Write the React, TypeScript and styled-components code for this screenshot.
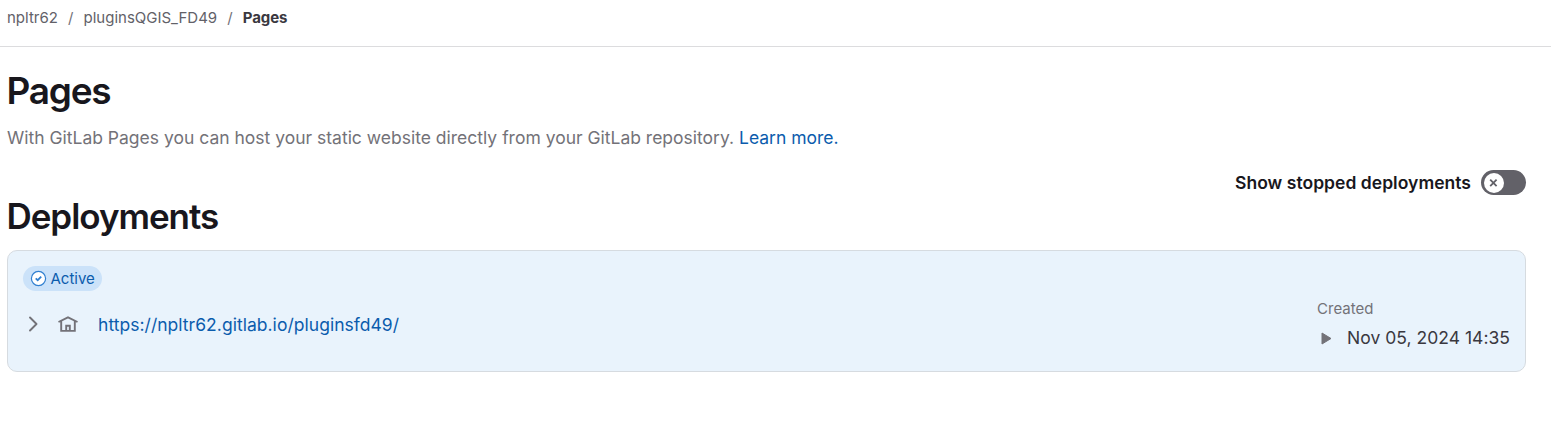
import React from 'react';
import styled, { createGlobalStyle } from 'styled-components';

const GlobalStyle = createGlobalStyle`
  * { box-sizing: border-box; }
  body { margin: 0; background: #fff; font-family: Inter, "Noto Sans", sans-serif; color: #18171d; }
  a { text-decoration: none; }
`;
const Breadcrumbs = styled.nav`
  display: flex;
  align-items: center;
  height: 47px;
  padding: 0 7px 11px;
  border-bottom: 1px solid #dcdcde;
  font-size: 15px;
  line-height: 20px;
`;
const Crumb = styled.a<{ $current?: boolean }>`
  color: ${p => (p.$current ? '#3a383f' : '#626168')};
  font-weight: ${p => (p.$current ? 700 : 400)};
  letter-spacing: ${p => (p.$current ? '-0.1px' : 'normal')};
`;
const Separator = styled.span`
  color: #737278;
  padding: 0 10.1px;
`;
const Main = styled.main`
  padding: 22px 25px 0 7px;
`;
const Title = styled.h1`
  margin: 0 0 0 -0.5px;
  font-size: 37px;
  line-height: 44px;
  font-weight: 600;
  letter-spacing: -1.25px;
`;
const Intro = styled.p`
  margin: 13px 0 0;
  font-size: 17.5px;
  line-height: 24px;
  color: #737278;
`;
const Link = styled.a`
  color: #0b5cad;
`;
const ToggleRow = styled.label`
  display: flex;
  justify-content: flex-end;
  align-items: center;
  gap: 10px;
  height: 25px;
  margin-top: 20px;
  font-size: 17.5px;
  font-weight: 600;
  letter-spacing: 0.03px;
`;
const Switch = styled.span`
  display: flex;
  align-items: center;
  width: 45px;
  height: 25px;
  padding: 2.5px;
  border-radius: 13px;
  background: #626168;
`;
const Section = styled.h2`
  margin: -1px 0 0 -0.5px;
  font-size: 35px;
  line-height: 44px;
  font-weight: 600;
  letter-spacing: -1.05px;
`;
const Card = styled.article`
  height: 122px;
  margin-top: 12px;
  padding: 15px;
  border: 1px solid #d6dbe0;
  border-radius: 10px;
  background: #e9f3fc;
`;
const Badge = styled.span`
  display: flex;
  align-items: center;
  gap: 3.5px;
  width: 79px;
  height: 25px;
  padding: 0 7px;
  border-radius: 13px;
  background: #cbe2f9;
  color: #0b5cad;
  font-size: 15px;
`;
const Details = styled.div`
  display: flex;
  justify-content: space-between;
`;
const Site = styled.div`
  display: flex;
  align-items: center;
  height: 24px;
  margin-top: 21px;
  font-size: 17.5px;
  letter-spacing: 0.03px;
`;
const Chevron = styled.svg`
  margin-right: 15px;
`;
const House = styled.svg`
  margin-right: 20px;
`;
const Created = styled.div`
  padding-top: 8px;
  color: #737278;
  font-size: 15px;
  line-height: 20px;
`;
const DateRow = styled.div`
  display: flex;
  align-items: center;
  gap: 15px;
  margin-top: 7px;
  padding-left: 4px;
  color: #3a383f;
  font-size: 17.5px;
  line-height: 24px;
  letter-spacing: 0.02px;
`;

export default function App() {
  return (
    <>
      <GlobalStyle />
      <Breadcrumbs>
        <Crumb>npltr62</Crumb><Separator>/</Separator>
        <Crumb>pluginsQGIS_FD49</Crumb><Separator>/</Separator>
        <Crumb $current>Pages</Crumb>
      </Breadcrumbs>
      <Main>
        <Title>Pages</Title>
        <Intro>With GitLab Pages you can host your static website directly from your GitLab repository. <Link>Learn more.</Link></Intro>
        <ToggleRow>
          Show stopped deployments
          <Switch>
            <svg width="20" height="20" viewBox="0 0 20 20">
              <circle cx="10" cy="10" r="10" fill="#fff" />
              <path d="M6.2 6.7l6.4 6.4M12.6 6.7l-6.4 6.4" stroke="#626168" strokeWidth="1.8" />
            </svg>
          </Switch>
        </ToggleRow>
        <Section>Deployments</Section>
        <Card>
          <Badge>
            <svg width="17" height="17" viewBox="0 0 17 17" fill="none" stroke="#2f7fd0">
              <circle cx="8.5" cy="8.5" r="7.1" fill="#fff" strokeWidth="1.2" />
              <path d="M5.7 8.4l2 1.8 3.5-3.5" strokeWidth="1.8" />
            </svg>
            Active
          </Badge>
          <Details>
            <Site>
              <Chevron width="20" height="20" viewBox="0 0 20 20" fill="none" stroke="#737278" strokeWidth="1.9">
                <path d="M7 3.5l6.5 6.5L7 16.5" strokeLinecap="round" strokeLinejoin="round" />
              </Chevron>
              <House width="20" height="20" viewBox="0 0 20 20" fill="none" stroke="#737278" strokeWidth="1.9">
                <path d="M.5 8L10 3.4 19.5 8M3.2 7v9.9h13.6V7M8.2 16.5v-4.7h3.6v4.7" />
              </House>
              <Link>https://npltr62.gitlab.io/pluginsfd49/</Link>
            </Site>
            <Created>
              Created
              <DateRow>
                <svg width="11" height="13" viewBox="0 0 11 13"><path d="M1 1l9 5.5L1 12z" fill="#737278" stroke="#737278" strokeLinejoin="round" /></svg>
                Nov 05, 2024 14:35
              </DateRow>
            </Created>
          </Details>
        </Card>
      </Main>
    </>
  );
}
